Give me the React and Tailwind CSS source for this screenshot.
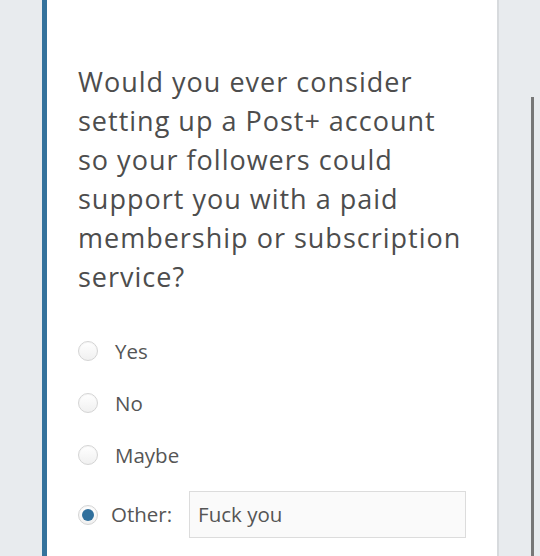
import React from "react";

function Radio({ checked }) {
  return (
    <span className="flex h-[20px] w-[20px] shrink-0 items-center justify-center rounded-full border border-[#d4d4d4] bg-gradient-to-b from-[#ffffff] to-[#f0f0f0] shadow-[inset_0_1px_1px_rgba(0,0,0,0.04)]">
      {checked && <span className="h-[12px] w-[12px] rounded-full bg-[#2f6f9c]" />}
    </span>
  );
}

export default function App() {
  const opts = ["Yes", "No", "Maybe"];
  return (
    <div className="flex h-[556px] w-[540px] overflow-hidden bg-[#e8ebee]" style={{ fontFamily: '"Open Sans", "Noto Sans", sans-serif' }}>
      <div className="ml-[42px] flex w-[457px] flex-col border-l-[5px] border-r-2 border-l-[#34729c] border-r-[#d7dadd] bg-white pl-[31px] pt-[62px]">
        <p className="whitespace-nowrap text-[27px] font-medium leading-[39px] tracking-[1px] text-[#4d4d4d]">
          Would you ever consider<br />
          setting up a Post+ account<br />
          so your followers could<br />
          support you with a paid<br />
          membership or subscription<br />
          service?
        </p>
        <div className="mt-[41px] flex flex-col gap-[24px]">
          {opts.map((o) => (
            <div key={o} className="flex h-[28px] items-center">
              <Radio />
              <span className="ml-[17px] text-[20.5px] text-[#555555]">{o}</span>
            </div>
          ))}
          <div className="-mt-[2px] flex items-center">
            <Radio checked />
            <span className="ml-[13px] text-[20.5px] text-[#555555]">Other:</span>
            <div className="ml-[17px] flex h-[47px] w-[277px] items-center border border-[#dcdcdc] bg-[#fafafa] pl-[8px] text-[20.5px] text-[#555555]">
              Fuck you
            </div>
          </div>
        </div>
      </div>
      <div className="relative flex-1">
        <div className="absolute left-[32px] top-[97px] h-[470px] w-[3px] bg-[#777777]" />
      </div>
    </div>
  );
}
